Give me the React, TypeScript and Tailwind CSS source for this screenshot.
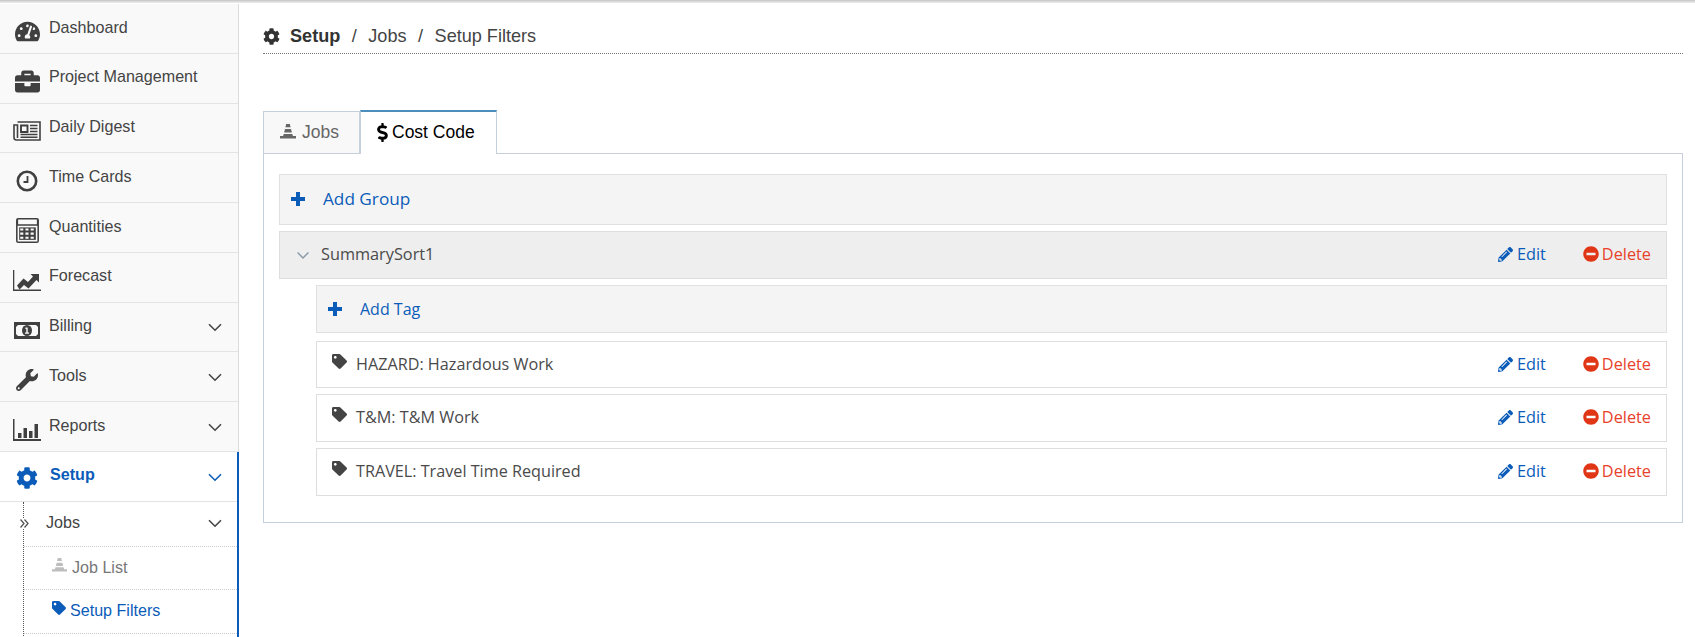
import React from "react";
import { FaTachometerAlt, FaBriefcase, FaWrench, FaCog, FaTag, FaPencilAlt, FaMinusCircle, FaDollarSign } from "react-icons/fa";

const Chevron = ({ className = "" }: { className?: string }) => (
  <svg viewBox="0 0 14 9" className={`w-[14px] h-[9px] ${className}`} fill="none" stroke="currentColor" strokeWidth="1.6"><polyline points="1,1.2 7,7.2 13,1.2" /></svg>
);
const Cone = ({ className = "" }: { className?: string }) => (
  <svg viewBox="0 0 16 16" className={className} fill="currentColor"><path d="M6.200 1h3.600l.8 3.200H5.400zM5 6h6l.9 3.500H4.100zM3.700 11h8.600l.6 2H16v2.400H0V13h3.100z" /></svg>
);
const Plus = () => (
  <svg viewBox="0 0 14 14" className="w-[14px] h-[14px] mr-[18px]" fill="currentColor"><path d="M5 0h4v5h5v4H9v5H5V9H0V5h5z" /></svg>
);
const NewsIcon = () => (
  <svg viewBox="0 0 28 20" className="w-[28px] h-[20px]" fill="none" stroke="#404040" strokeWidth="1.600">
    <path d="M4.500 1h22.500v18H3.500a2.500 2.500 0 0 1-2.500-2.500V4h3.500v13" />
    <path d="M8 4.500h6.500v6.500H8z" strokeWidth="1.900" />
    <path d="M17 4.500h7.500M17 7.500h7.500M17 10.500h7.500M7.500 13.500h17M7.500 16.300h17" strokeWidth="1.600" />
  </svg>
);
const ClockIcon = () => (
  <svg viewBox="0 0 22 22" className="w-[22px] h-[22px]" fill="none" stroke="#404040"><circle cx="11" cy="11" r="9.200" strokeWidth="2.600" /><path d="M11.500 6v6H7.500" strokeWidth="1.800" /></svg>
);
const CalcIcon = () => (
  <svg viewBox="0 0 22 24" className="w-[23px] h-[25px]" fill="#404040"><path fillRule="evenodd" d="M2 0h18a2 2 0 0 1 2 2v20a2 2 0 0 1-2 2H2a2 2 0 0 1-2-2V2a2 2 0 0 1 2-2zm0 1.500v4.500h18V1.500zM1.500 7.500v15h19v-15z" /><path d="M3 9h16v12H3z" /><path fill="#f9f9f9" d="M4 10h3v2H4zm5 0h3v2H9zm5 0h3v2h-3zM4 14h3v2H4zm5 0h3v2H9zm5 0h3v2h-3zM4 18h3v2H4zm5 0h3v2H9zm5 0h3v2h-3z" /></svg>
);
const BillIcon = () => (
  <svg viewBox="0 0 26 17" className="w-[26px] h-[17px]"><path fill="#404040" d="M0 0h26v17H0z" /><path fill="#f9f9f9" d="M4 3h18l2 2v7l-2 2H4l-2-2V5z" /><ellipse cx="13" cy="8.500" rx="5" ry="5.500" fill="#404040" /><path fill="#f9f9f9" d="M11.500 5.500h2.200v5h1.300v1.200h-4v-1.200h1.300V7h-1z" /></svg>
);
const BarsIcon = () => (
  <svg viewBox="0 0 28 22" className="w-[28px] h-[22px]" fill="#404040"><path d="M0 0h1.500v20H28v2H0z" /><path d="M5 14h3.500v5H5zM10.500 9H14v10h-3.500zM16 12h3.500v7H16zM21.500 5H25v14h-3.500z" /></svg>
);
const ForecastIcon = () => (
  <svg viewBox="0 0 28 21" className="w-[28px] h-[21px]" fill="#404040"><path d="M0 0h1.300v19.500H28V21H0z" /><path d="M4 15.500l6.500-7 4.500 3.500 5-5.500-2.500-2.500H26v8.500l-2.500-2.500-8 8.500-4.500-3.500-4.500 4.500z" /></svg>
);
const Guillemet = ({ className = "" }: { className?: string }) => (
  <svg viewBox="0 0 9 9" className={`w-[9px] h-[9px] ${className}`} fill="none" stroke="currentColor" strokeWidth="1.300"><path d="M.5.500l3.500 4-3.500 4M4.500.500l3.500 4-3.500 4" /></svg>
);

const iconCls = "text-[#404040]";
const items = [
  { label: "Dashboard", icon: <FaTachometerAlt size={25} className={iconCls} /> },
  { label: "Project Management", icon: <FaBriefcase size={25} className={iconCls} /> },
  { label: "Daily Digest", icon: <NewsIcon /> },
  { label: "Time Cards", icon: <ClockIcon /> },
  { label: "Quantities", icon: <CalcIcon /> },
  { label: "Forecast", icon: <ForecastIcon /> },
  { label: "Billing", icon: <BillIcon />, chev: true },
  { label: "Tools", icon: <FaWrench size={22} className={iconCls} />, chev: true },
  { label: "Reports", icon: <BarsIcon />, chev: true },
];

const Row = ({ label, icon, chev, h }: { label: string; icon: React.ReactNode; chev?: boolean; h: string }) => (
  <div className={`${h} flex items-center border-b border-[#e3e3e3] pr-[16px]`}>
    <div className="w-[49px] shrink-0 flex justify-center pl-[5px] pt-[7px]">{icon}</div>
    <span className="flex-1 text-[16.100px] text-[#444] pb-[3px]">{label}</span>
    {chev && <Chevron className="text-[#444] mt-[2px]" />}
  </div>
);

const Actions = () => (
  <div className="flex items-center text-[16.300px] pb-[2px]">
    <span className="flex items-center text-[#0b5cb8]"><FaPencilAlt size={15} className="text-[#0b5cb8] mr-[4px]" />Edit</span>
    <span className="flex items-center text-[#e8412a] ml-[37px]"><FaMinusCircle size={16} className="text-[#e03616] mr-[3px]" />Delete</span>
  </div>
);

const TagRow = ({ text, h }: { text: string; h: string }) => (
  <div className={`${h} border border-[#dedede] bg-white flex items-center pl-[15px] pr-[15px]`}>
    <FaTag size={15} className="text-[#444] mr-[9px] mb-[7px]" />
    <span className="flex-1 text-[16.200px] text-[#4a4a4a] pb-[2px]">{text}</span>
    <Actions />
  </div>
);

export default function App() {
  return (
    <div className="relative flex h-[637px] w-[1695px] overflow-hidden bg-white font-['Liberation_Sans',Arial,sans-serif]">
      <div className="absolute top-0 left-0 right-0 h-[3px] bg-gradient-to-b from-[#c4c4c4] to-[#f0f0f0]" />
      <aside className="w-[239px] shrink-0 pt-[4px] flex flex-col">
        <div className="bg-[#f9f9f9] border-r border-[#dcdcdc]">
          {items.map((it, i) => (
            <Row key={it.label} label={it.label} icon={it.icon} chev={it.chev} h={i % 2 === 0 ? "h-[49.500px]" : "h-[50px]"} />
          ))}
        </div>
        <div className="flex-1 bg-white border-r-2 border-[#0b5cb8]">
          <div className="h-[50px] flex items-center border-b border-[#e3e3e3] pr-[15px]">
            <div className="w-[49px] shrink-0 flex justify-center pl-[5px] pt-[3px]"><FaCog size={22} className="text-[#0b5cb8]" /></div>
            <span className="flex-1 text-[16.100px] font-bold text-[#0b5cb8] pl-[1px] pb-[3px]">Setup</span>
            <Chevron className="text-[#0b5cb8] mt-[3px]" />
          </div>
          <div className="ml-[23px] border-l border-dotted border-[#555] h-[200px] relative">
            <Guillemet className="absolute left-[-4px] top-[17px] text-[#555] bg-white" />
            <div className="h-[45px] flex items-center border-b border-dotted border-[#ccc] pl-[22px] pr-[15px]">
              <span className="flex-1 text-[16.100px] text-[#444] pb-[3px]">Jobs</span>
              <Chevron className="text-[#444]" />
            </div>
            <div className="h-[43px] flex items-center border-b border-dotted border-[#ccc] pl-[28px]">
              <Cone className="w-[15px] h-[15px] text-[#bdbdbd] mb-[6px]" />
              <span className="text-[16.100px] text-[#777] ml-[5px]">Job List</span>
            </div>
            <div className="h-[44px] flex items-center border-b border-dotted border-[#ccc] pl-[28px] pb-[1px]">
              <FaTag size={14} className="text-[#0b5cb8] mb-[5px]" />
              <span className="text-[16.100px] text-[#0b5cb8] ml-[4px]">Setup Filters</span>
            </div>
          </div>
        </div>
      </aside>
      <main className="flex-1 pl-[24px] pr-[12px]">
        <div className="h-[54px] border-b border-dotted border-[#777] flex items-end pb-[3px] text-[18.100px] text-[#444]">
          <FaCog size={17} className="text-[#333] mr-[10px] mb-[5px]" />
          <span className="font-bold text-[#333]">Setup</span>
          <span className="mx-[11.500px]">/</span>
          <span>Jobs</span>
          <span className="mx-[11.500px]">/</span>
          <span>Setup Filters</span>
        </div>
        <div className="mt-[56px] flex h-[44px] relative z-10">
          <div className="w-[97px] mt-[1px] h-[43px] border border-[#c5d0dc] bg-[#f8f8f8] flex items-center pl-[16px] text-[17.500px] text-[#666]">
            <Cone className="w-[16px] h-[16px] text-[#666] mr-[6px] mb-[3px]" />Jobs
          </div>
          <div className="w-[137px] h-[44px] border-x border-[#c5d0dc] border-t-2 border-t-[#4c8fbd] bg-white flex items-center pl-[12px] pb-[2px] text-[17.500px] text-black">
            <FaDollarSign size={19} />Cost Code
          </div>
        </div>
        <div className="-mt-[1px] h-[370px] border border-[#c5d0dc] pt-[20px] px-[15px] font-['Open_Sans',sans-serif]">
          <div className="h-[51px] border border-[#e0e0e0] bg-[#f4f4f4] flex items-center pl-[11px] pb-[2px] text-[17.200px] text-[#0b5cb8]">
            <Plus />Add Group
          </div>
          <div className="mt-[6px] h-[48px] border border-[#dedede] bg-[#eeeeee] flex items-center pl-[16px] pr-[15px]">
            <Chevron className="text-[#8a9aa6] mr-[11px] scale-90" />
            <span className="flex-1 text-[16.300px] text-[#4a4a4a] pb-[2px]">SummarySort1</span>
            <Actions />
          </div>
          <div className="ml-[37px] mt-[6px] flex flex-col">
            <div className="h-[48px] border border-[#e0e0e0] bg-[#f4f4f4] flex items-center pl-[11px] text-[16px] text-[#0b5cb8]">
              <Plus />Add Tag
            </div>
            <div className="mt-[8px] flex flex-col gap-[6px]">
              <TagRow text="HAZARD: Hazardous Work" h="h-[47px] pt-[1px]" />
              <TagRow text="T&M: T&M Work" h="h-[48px]" />
              <TagRow text="TRAVEL: Travel Time Required" h="h-[48px]" />
            </div>
          </div>
        </div>
      </main>
    </div>
  );
}
